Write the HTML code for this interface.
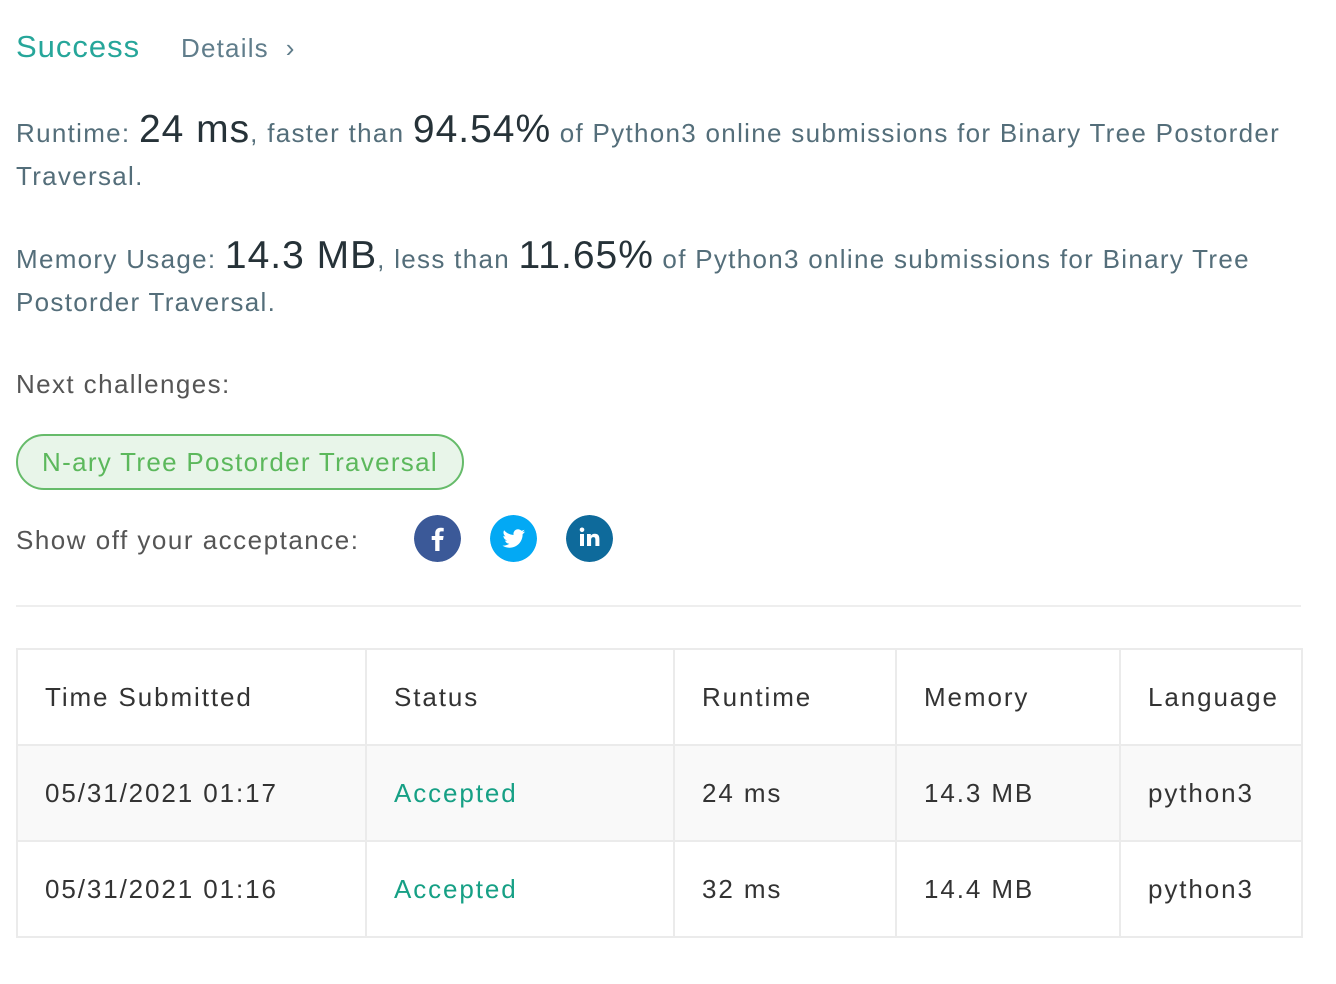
<!DOCTYPE html>
<html><head><meta charset="utf-8"><style>
body{margin:0;background:#fff;font-family:"Liberation Sans",sans-serif;width:1336px;height:984px;position:relative;overflow:hidden}
.a{position:absolute;white-space:nowrap}
.t{color:#546e7a;font-size:26px;letter-spacing:1.3px}
.big{font-size:39px;color:#263238;letter-spacing:1px}
table{position:absolute;left:16px;top:648px;border-collapse:collapse;font-size:26px;color:#333;letter-spacing:1.9px}
td{border:2px solid #ebebeb;height:96px;padding:0 0 0 27px;box-sizing:border-box}
.acc{color:#16a085}
.ic{position:absolute;top:515px;width:47px;height:47px;border-radius:50%}
</style></head><body>
<div class="a" style="left:16px;top:29px;font-size:31px;color:#26a69a;letter-spacing:1px">Success</div>
<div class="a" style="left:181px;top:33px;font-size:26px;color:#607d8b;letter-spacing:1.2px">Details&nbsp; ›</div>
<div class="a t" style="left:16px;top:108px">Runtime: <span class="big">24 ms</span>, faster than <span class="big">94.54%</span> of Python3 online submissions for Binary Tree Postorder</div>
<div class="a t" style="left:16px;top:161px">Traversal.</div>
<div class="a t" style="left:16px;top:234px">Memory Usage: <span class="big">14.3 MB</span>, less than <span class="big">11.65%</span> of Python3 online submissions for Binary Tree</div>
<div class="a t" style="left:16px;top:287px">Postorder Traversal.</div>
<div class="a t" style="left:16px;top:369px;color:#555;letter-spacing:1.4px">Next challenges:</div>
<div class="a" style="left:16px;top:434px;width:444px;height:52px;border:2px solid #66bb6a;border-radius:28px;background:#e8f5e9;color:#5cb85c;font-size:26px;line-height:52px;text-align:center;letter-spacing:1.3px">N-ary Tree Postorder Traversal</div>
<div class="a t" style="left:16px;top:525px;color:#555;letter-spacing:1.5px">Show off your acceptance:</div>
<svg class="ic" style="left:414px" viewBox="0 0 47 47"><circle cx="23.5" cy="23.5" r="23.5" fill="#3b5998"/><path d="M25.5 36V25h3.5l.6-4h-4.1v-2.6c0-1.2.4-2 2-2h2.2V13c-.4 0-1.7-.2-3.2-.2-3.2 0-5.3 2-5.3 5.5v2.7h-3.5v4h3.5V36z" fill="#fff"/></svg>
<svg class="ic" style="left:490px" viewBox="0 0 47 47"><circle cx="23.5" cy="23.5" r="23.5" fill="#03a9f4"/><path d="M35 16.5c-.8.4-1.7.6-2.6.7.9-.6 1.6-1.4 2-2.5-.9.5-1.9.9-2.9 1.1a4.6 4.6 0 0 0-7.9 4.2c-3.8-.2-7.2-2-9.5-4.8-1.3 2.2-.5 4.9 1.4 6.2-.8 0-1.5-.2-2.1-.6 0 2.3 1.6 4.2 3.7 4.600-.7.2-1.4.2-2.1.1.6 1.9 2.3 3.2 4.3 3.2-1.9 1.5-4.3 2.2-6.8 1.9 2.1 1.3 4.5 2.1 7.1 2.1 8.5 0 13.3-7.2 13-13.6.9-.6 1.7-1.4 2.3-2.3z" fill="#fff"/></svg>
<svg class="ic" style="left:566px" viewBox="0 0 47 47"><circle cx="23.5" cy="23.5" r="23.5" fill="#0e6a9b"/><rect x="14" y="19" width="4" height="12" fill="#fff"/><circle cx="16" cy="14.8" r="2.3" fill="#fff"/><path d="M21 19h3.8v1.7c.6-1.1 2-2 4-2 4 0 4.6 2.6 4.6 5.9V31h-4v-5.6c0-1.5 0-3.3-2-3.3s-2.3 1.6-2.3 3.2V31H21z" fill="#fff"/></svg>
<div class="a" style="left:16px;top:605px;width:1285px;height:2px;background:#eee"></div>
<table>
<tr style="background:#fff"><td style="width:349px">Time Submitted</td><td style="width:308px">Status</td><td style="width:222px">Runtime</td><td style="width:224px">Memory</td><td style="width:182px">Language</td></tr>
<tr style="background:#f9f9f9"><td>05/31/2021 01:17</td><td class="acc">Accepted</td><td>24 ms</td><td>14.3 MB</td><td>python3</td></tr>
<tr><td>05/31/2021 01:16</td><td class="acc">Accepted</td><td>32 ms</td><td>14.4 MB</td><td>python3</td></tr>
</table>
</body></html>
